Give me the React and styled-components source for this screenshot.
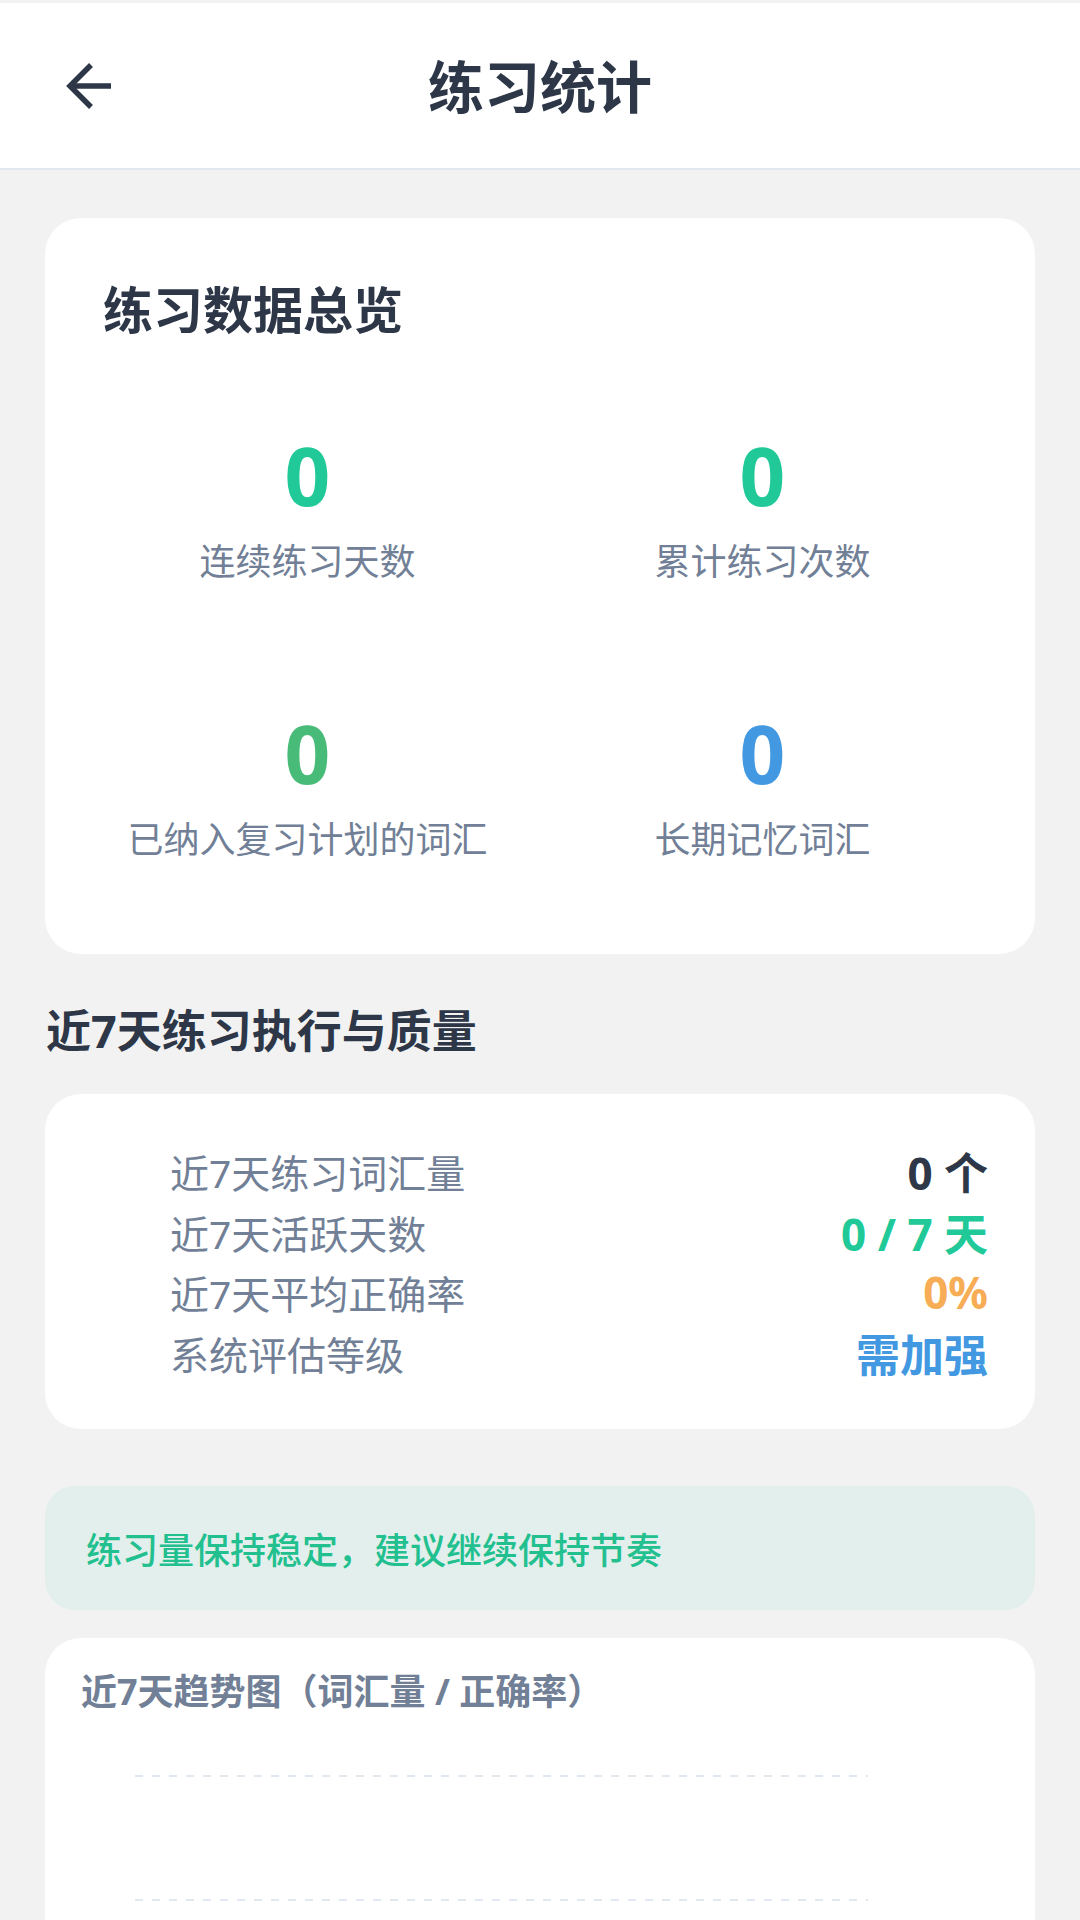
import React from "react";
import styled, { createGlobalStyle } from "styled-components";

const GlobalStyle = createGlobalStyle`
  html, body {
    margin: 0;
    padding: 0;
    background: #f2f2f2;
  }
  body {
    font-family: "Noto Sans", "Noto Sans CJK SC", sans-serif;
    color: #2d3748;
  }
  * {
    box-sizing: border-box;
  }
`;

const Page = styled.div`
  width: 1080px;
  min-height: 1920px;
  padding-top: 3px;
  background: #f2f2f2;
  overflow: hidden;
`;

const Header = styled.header`
  position: relative;
  height: 167px;
  display: flex;
  align-items: center;
  justify-content: center;
  background: #fff;
  border-bottom: 2px solid #e2e8f0;
`;

const BackButton = styled.button`
  position: absolute;
  left: 56px;
  top: 50%;
  transform: translateY(-50%);
  width: 68px;
  height: 68px;
  padding: 0;
  border: none;
  background: none;
  display: flex;
  align-items: center;
  justify-content: center;
  color: #2d3748;
`;

const Title = styled.h1`
  margin: 0;
  font-size: 56px;
  line-height: 68px;
  font-weight: 700;
  color: #2d3748;
`;

const Content = styled.main`
  padding: 48px 45px 0;
  display: flex;
  flex-direction: column;
`;

const Card = styled.section`
  background: #fff;
  border-radius: 36px;
`;

const OverviewCard = styled(Card)`
  padding: 62px 45px 89px 35px;
`;

const CardTitle = styled.h2`
  margin: 0 0 0 23px;
  font-size: 50px;
  line-height: 60px;
  font-weight: 700;
  color: #2d3748;
`;

const StatGrid = styled.div`
  display: grid;
  grid-template-columns: 1fr 1fr;
  row-gap: 118px;
  margin-top: 87px;
`;

const Stat = styled.div`
  display: flex;
  flex-direction: column;
  align-items: center;
  gap: 14px;
`;

const StatValue = styled.div`
  font-size: 80px;
  line-height: 96px;
  font-weight: 700;
  color: ${(p) => p.color};
`;

const StatLabel = styled.div`
  font-size: 36px;
  line-height: 50px;
  color: #718096;
`;

const SectionTitle = styled.h2`
  margin: 47px 0 33px 1px;
  font-size: 45px;
  line-height: 60px;
  font-weight: 700;
  color: #2d3748;
`;

const QualityCard = styled(Card)`
  padding: 47px 47px 46px 125px;
`;

const QualityRow = styled.div`
  display: flex;
  align-items: center;
  justify-content: space-between;
  height: 60.5px;
`;

const RowLabel = styled.span`
  font-size: 39px;
  color: #718096;
`;

const RowValue = styled.span`
  font-size: 44px;
  font-weight: 700;
  color: ${(p) => p.color};
`;

const Tip = styled.div`
  margin-top: 57px;
  height: 124px;
  padding: 0 41px;
  display: flex;
  align-items: center;
  border-radius: 30px;
  background: #e3efec;
  color: #22c08f;
  font-size: 36px;
  font-weight: 500;
`;

const ChartCard = styled(Card)`
  margin-top: 28px;
  padding: 31px 36px 40px;
  min-height: 520px;
`;

const ChartTitle = styled.h3`
  margin: 0;
  font-size: 36px;
  line-height: 46px;
  font-weight: 700;
  color: #718096;
`;

const ChartArea = styled.div`
  margin: 18px 0 0 54px;
  width: 733px;
`;

const ArrowLeft = () => (
  <svg width="48" height="48" viewBox="0 0 48 48" fill="none" stroke="currentColor" strokeWidth="5.5">
    <path d="M45 24H6" />
    <path d="M25 3 4 24l21 21" />
  </svg>
);

const stats = [
  { value: 0, label: "连续练习天数", color: "#20c997" },
  { value: 0, label: "累计练习次数", color: "#20c997" },
  { value: 0, label: "已纳入复习计划的词汇", color: "#48bb78" },
  { value: 0, label: "长期记忆词汇", color: "#4299e1" },
];

const rows = [
  { label: "近7天练习词汇量", value: "0 个", color: "#2d3748" },
  { label: "近7天活跃天数", value: "0 / 7 天", color: "#20c997" },
  { label: "近7天平均正确率", value: "0%", color: "#f6ad55" },
  { label: "系统评估等级", value: "需加强", color: "#4299e1" },
];

const gridLines = [43, 167, 291, 415];

function App() {
  return (
    <Page>
      <GlobalStyle />
      <Header>
        <BackButton aria-label="返回">
          <ArrowLeft />
        </BackButton>
        <Title>练习统计</Title>
      </Header>
      <Content>
        <OverviewCard>
          <CardTitle>练习数据总览</CardTitle>
          <StatGrid>
            {stats.map((s) => (
              <Stat key={s.label}>
                <StatValue color={s.color}>{s.value}</StatValue>
                <StatLabel>{s.label}</StatLabel>
              </Stat>
            ))}
          </StatGrid>
        </OverviewCard>

        <SectionTitle>近7天练习执行与质量</SectionTitle>
        <QualityCard>
          {rows.map((r) => (
            <QualityRow key={r.label}>
              <RowLabel>{r.label}</RowLabel>
              <RowValue color={r.color}>{r.value}</RowValue>
            </QualityRow>
          ))}
        </QualityCard>

        <Tip>练习量保持稳定，建议继续保持节奏</Tip>

        <ChartCard>
          <ChartTitle>近7天趋势图（词汇量 / 正确率）</ChartTitle>
          <ChartArea>
            <svg width="733" height="430" viewBox="0 0 733 430">
              {gridLines.map((y) => (
                <line key={y} x1="0" x2="733" y1={y} y2={y} stroke="#e2e8f0" strokeWidth="2" strokeDasharray="8 9" />
              ))}
            </svg>
          </ChartArea>
        </ChartCard>
      </Content>
    </Page>
  );
}

export default App;
